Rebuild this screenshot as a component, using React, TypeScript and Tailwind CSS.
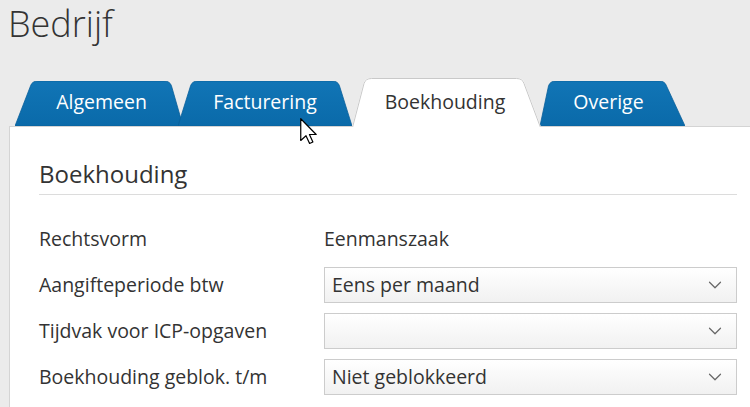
import { ChevronDown } from 'lucide-react';

interface TabItem {
  label: string;
  width: number;
  height: number;
  left: number;
  right: number;
  active?: boolean;
  offset: string;
  pad: string;
}

const tabs: TabItem[] = [
  { label: 'Algemeen', width: 168, height: 45, left: 17, right: 13, offset: '', pad: 'pl-[5px]' },
  { label: 'Facturering', width: 174, height: 45, left: 14, right: 14, offset: '-ml-[5px]', pad: '' },
  { label: 'Boekhouding', width: 189, height: 49, left: 13, right: 18, offset: '', pad: 'pr-[3px]', active: true },
  { label: 'Overige', width: 145, height: 45, left: 10, right: 20, offset: '-ml-px', pad: 'pr-[8px]' },
];

// trapezoid with rounded top corners
function tabPath(w: number, h: number, l: number, r: number, closed = true) {
  const d = `M0 ${h} L${l - 1.5} 5 Q${l} 0 ${l + 6} 0 H${w - r - 6} Q${w - r} 0 ${w - r + 1.5} 5 L${w} ${h}`;
  return closed ? d + ' Z' : d;
}

function Tab({ tab }: { tab: TabItem }) {
  const boxHeight = tab.active ? tab.height : tab.height + 1;
  return (
    <div
      className={`relative flex shrink-0 items-end justify-center pb-[12px] ${tab.offset} ${tab.pad} ${tab.active ? 'z-10' : ''}`}
      style={{ width: tab.width, height: boxHeight }}
    >
      <svg className="absolute left-0 top-0" width={tab.width} height={tab.height} viewBox={`0 0 ${tab.width} ${tab.height}`}>
        <defs>
          <linearGradient id="tabBlue" x1="0" y1="0" x2="0" y2="1">
            <stop offset="0" stopColor="#1175b6" />
            <stop offset="1" stopColor="#0a6aa9" />
          </linearGradient>
        </defs>
        {tab.active ? (
          <>
            <path d={tabPath(tab.width, tab.height, tab.left, tab.right)} fill="#ffffff" />
            <path
              d={tabPath(tab.width - 1, tab.height, tab.left, tab.right, false)}
              transform="translate(0.5 0.5)"
              fill="none"
              stroke="#c9c9c9"
              strokeWidth="1"
            />
          </>
        ) : (
          <path
            d={tabPath(tab.width, tab.height, tab.left, tab.right)}
            fill="url(#tabBlue)"
            stroke="#09609a"
            strokeWidth="0.8"
          />
        )}
      </svg>
      <span className={`relative text-[19.5px] leading-[26px] ${tab.active ? 'text-[#333333]' : 'text-white'}`}>
        {tab.label}
      </span>
    </div>
  );
}

function SelectBox({ value }: { value?: string }) {
  return (
    <div className="flex h-[36px] items-center justify-between border border-[#cccccc] bg-gradient-to-b from-white to-[#f1f1f1] pl-[7px] pr-[10px]">
      <span className="text-[19.5px] leading-[26px] text-[#333333]">{value}</span>
      <ChevronDown className="h-[22px] w-[22px] text-[#666666]" strokeWidth={1.3} />
    </div>
  );
}

const rows: { label: string; value: string; select?: boolean }[] = [
  { label: 'Rechtsvorm', value: 'Eenmanszaak' },
  { label: 'Aangifteperiode btw', value: 'Eens per maand', select: true },
  { label: 'Tijdvak voor ICP-opgaven', value: '', select: true },
  { label: 'Boekhouding geblok. t/m', value: 'Niet geblokkeerd', select: true },
];

export default function App() {
  return (
    <div className="relative flex h-[407px] w-[750px] flex-col overflow-hidden bg-[#ebebeb] font-['Open_Sans',sans-serif] text-[#333333]">
      <h1 className="pl-[8px] text-[36px] font-light leading-[48px] text-[#333333]">Bedrijf</h1>

      <div className="relative z-10 -mb-px ml-[15px] mt-[30px] flex items-end">
        {tabs.map((tab) => (
          <Tab key={tab.label} tab={tab} />
        ))}
      </div>

      <div className="ml-[9px] flex-1 border-l border-t border-[#d4d4d4] bg-white pl-[29px] pr-[13px] pt-[31px]">
        <h2 className="border-b border-[#dcdcdc] pb-[4px] text-[24px] font-normal leading-[32px]">Boekhouding</h2>

        <div className="mt-[26px] flex flex-col gap-[10px]">
          {rows.map((row) => (
            <div key={row.label} className="grid h-[36px] grid-cols-[285px_1fr] items-center">
              <span className="text-[19.5px] leading-[26px]">{row.label}</span>
              {row.select ? <SelectBox value={row.value} /> : <span className="text-[19.5px] leading-[26px]">{row.value}</span>}
            </div>
          ))}
        </div>
      </div>

      {/* mouse pointer */}
      <svg className="absolute left-[300px] top-[118px] z-20" width="18" height="27" viewBox="0 0 12 18">
        <path d="M0.5 0.5 V15 L4 11.8 L6.4 17 L8.6 16 L6.3 11 H10.8 Z" fill="#ffffff" stroke="#000000" strokeWidth="0.8" strokeLinejoin="round" />
      </svg>
    </div>
  );
}
